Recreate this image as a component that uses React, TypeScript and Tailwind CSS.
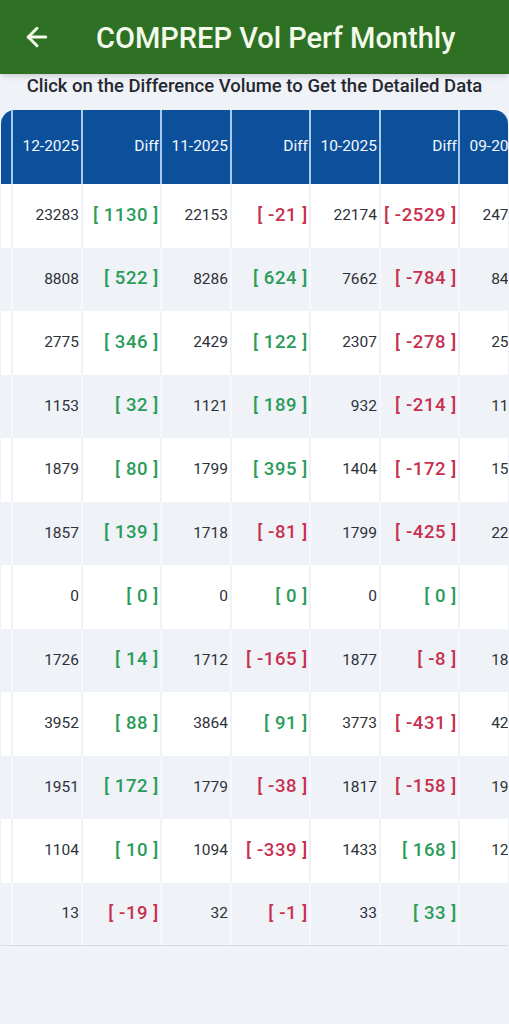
import { ArrowLeft } from 'lucide-react';

type Row = [number, number, number, number, number, number, number];

const months = ['12-2025', '11-2025', '10-2025', '09-2025'];

// m12, d12, m11, d11, m10, d10, m09
const rows: Row[] = [
    [23283, 1130, 22153, -21, 22174, -2529, 24703],
    [8808, 522, 8286, 624, 7662, -784, 8446],
    [2775, 346, 2429, 122, 2307, -278, 2585],
    [1153, 32, 1121, 189, 932, -214, 1146],
    [1879, 80, 1799, 395, 1404, -172, 1576],
    [1857, 139, 1718, -81, 1799, -425, 2224],
    [0, 0, 0, 0, 0, 0, 0],
    [1726, 14, 1712, -165, 1877, -8, 1885],
    [3952, 88, 3864, 91, 3773, -431, 4204],
    [1951, 172, 1779, -38, 1817, -158, 1975],
    [1104, 10, 1094, -339, 1433, 168, 1265],
    [13, -19, 32, -1, 33, 33, 0],
];

function DiffValue({ value }: { value: number }) {
    const color = value < 0 ? 'text-[#c8304f]' : 'text-[#2a9c5a]';
    return (
        <span className={`text-[18.5px] font-medium tracking-[0.6px] ${color}`}>
            [ {value} ]
        </span>
    );
}

export default function App() {
    return (
        <div className="min-h-screen w-full bg-[#eff2f7] overflow-hidden" style={{ fontFamily: 'Roboto, "Noto Sans", sans-serif' }}>
            {/* App bar */}
            <div className="relative z-10 h-[74px] bg-[#2e7024] flex items-center shadow-md">
                <div className="w-[96px] flex items-center pl-[22px]">
                    <ArrowLeft className="w-[30px] h-[30px] text-[#f3faea]" strokeWidth={2.4} />
                </div>
                <h1 className="text-[29px] font-medium text-[#f3faea] leading-none pt-[2px]">COMPREP Vol Perf Monthly</h1>
            </div>

            {/* Hint */}
            <div className="h-[26px] flex items-center justify-center">
                <p className="text-[18.5px] font-medium text-[#252830] whitespace-nowrap">
                    Click on the Difference Volume to Get the Detailed Data
                </p>
            </div>

            {/* Table */}
            <div className="mt-[10px] mx-px rounded-t-[14px] overflow-hidden">
                <div className="w-max">
                    {/* Header row */}
                    <div className="flex h-[74px] bg-[#0c509b] text-[#f4f8fd] text-[15.5px]">
                        <div className="w-[12px] border-r-2 border-[#a6c9ee]" />
                        {months.map((m, i) => (
                            <div key={m} className="flex">
                                <div className="w-[70px] flex items-center justify-end pr-[2px] border-r-2 border-[#a6c9ee]">
                                    {m}
                                </div>
                                {i < 3 && (
                                    <div className="w-[79px] flex items-center justify-end pr-[1px] border-r-2 border-[#a6c9ee]">
                                        Diff
                                    </div>
                                )}
                            </div>
                        ))}
                    </div>

                    {/* Body rows */}
                    {rows.map((r, idx) => {
                        const alt = idx % 2 === 1;
                        const line = alt ? 'border-[#f7f8fb]' : 'border-[#f1f2f5]';
                        return (
                            <div
                                key={idx}
                                className={`flex h-[63.5px] ${alt ? 'bg-[#eff2f7]' : 'bg-white'} ${idx === rows.length - 1 ? 'border-b border-[#d7dae0]' : ''}`}
                            >
                                <div className={`w-[12px] border-r-2 ${line}`} />
                                {[0, 2, 4, 6].map((c) => (
                                    <div key={c} className="flex">
                                        <div className={`w-[70px] flex items-center justify-end pr-[2px] border-r-2 ${line} text-[15.5px] text-[#2e3138]`}>
                                            {r[c]}
                                        </div>
                                        {c < 6 && (
                                            <div className={`w-[79px] flex items-center justify-end pr-[1px] border-r-2 ${line}`}>
                                                <DiffValue value={r[c + 1]} />
                                            </div>
                                        )}
                                    </div>
                                ))}
                            </div>
                        );
                    })}
                </div>
            </div>
        </div>
    );
}
